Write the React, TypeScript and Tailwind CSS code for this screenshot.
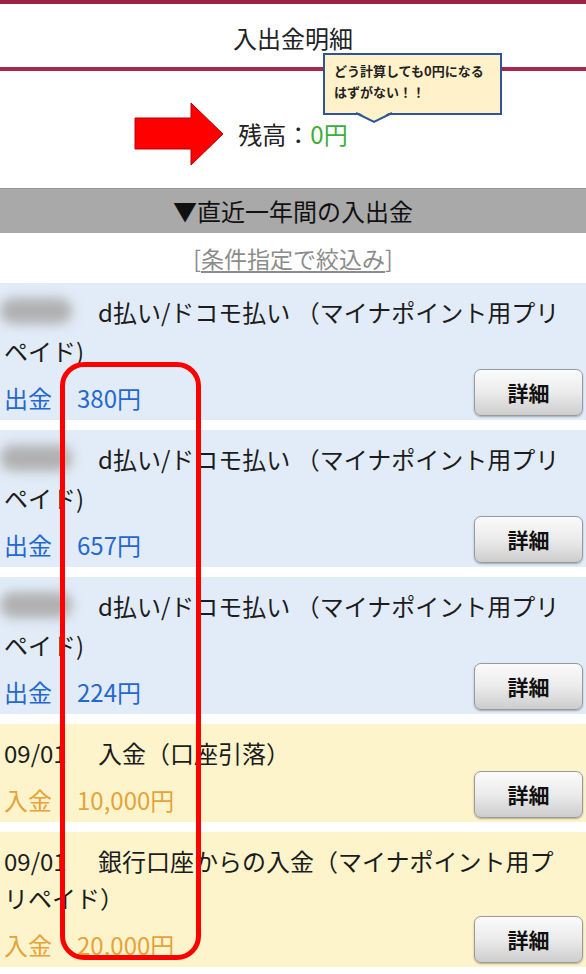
import React from "react";

type Entry = {
  date?: string;
  lines: string[];
  kind: "out" | "in";
  amount: string;
};

const ENTRIES: Entry[] = [
  { lines: ["d払い/ドコモ払い （マイナポイント用プリ", "ペイド)"], kind: "out", amount: "380円" },
  { lines: ["d払い/ドコモ払い （マイナポイント用プリ", "ペイド)"], kind: "out", amount: "657円" },
  { lines: ["d払い/ドコモ払い （マイナポイント用プリ", "ペイド)"], kind: "out", amount: "224円" },
  { date: "09/01", lines: ["入金（口座引落）"], kind: "in", amount: "10,000円" },
  { date: "09/01", lines: ["銀行口座からの入金（マイナポイント用プ", "リペイド）"], kind: "in", amount: "20,000円" },
];

function Row({ entry }: { entry: Entry }) {
  const isOut = entry.kind === "out";
  return (
    <div
      className={
        "pt-[10px] pb-[4px] pl-[4px] pr-[3px] " +
        (isOut ? "bg-[#e2ecf8]" : "bg-[#fdf4cc]")
      }
    >
      <div className="text-[24px] leading-[37px] whitespace-nowrap text-[#1c1c1c]">
        <span className="inline-block w-[94px] align-top">
          {entry.date ? (
            entry.date
          ) : (
            // redacted date
            <span className="inline-block -ml-[4px] mt-[5px] w-[72px] h-[26px] rounded-full bg-[#b0b0b0] blur-[6px]" />
          )}
        </span>
        {entry.lines.map((l, i) => (
          <React.Fragment key={i}>
            {i > 0 && <br />}
            {l}
          </React.Fragment>
        ))}
      </div>
      <div className="flex items-end justify-between">
        <div
          className={
            "text-[24px] leading-[37px] " +
            (isOut ? "text-[#2568cf]" : "text-[#e5a33a]")
          }
        >
          <span className="inline-block w-[73px]">{isOut ? "出金" : "入金"}</span>
          {entry.amount}
        </div>
        <button className="w-[109px] h-[47px] rounded-[7px] border border-[#9a9a9a] bg-gradient-to-b from-[#fbfbfb] via-[#ebebeb] to-[#cdcdcd] shadow-[0_1px_2px_rgba(0,0,0,0.3)] text-[21px] font-bold text-[#111]">
          詳細
        </button>
      </div>
    </div>
  );
}

export default function App() {
  return (
    <div className="relative w-[586px] min-h-[974px] bg-white font-['Noto_Sans_CJK_JP',sans-serif] overflow-hidden">
      <div className="h-[4px] bg-[#9b2244]" />
      <div className="h-[67px] pt-[4px] flex items-center justify-center text-[24px] text-[#222] border-b-[4px] border-[#a8284c]">
        入出金明細
      </div>
      <div className="h-[117px] pt-[8px] flex items-center justify-center text-[24px] text-[#222]">
        残高：<span className="text-[#3cae38]">0円</span>
      </div>
      <div className="h-[45px] bg-[#a9a9a9] border-t border-[#959595] flex items-center justify-center text-[24px] text-[#111]">
        ▼直近一年間の入出金
      </div>
      <div className="h-[50px] flex items-center justify-center text-[23px] text-[#8c8c8c]">
        [<span className="underline underline-offset-[3px]">条件指定で絞込み</span>]
      </div>
      <div className="flex flex-col gap-[10px]">
        {ENTRIES.map((e, i) => (
          <Row key={i} entry={e} />
        ))}
      </div>

      {/* annotations */}
      <svg className="absolute left-[133px] top-[101px]" width="92" height="66" viewBox="0 0 92 66">
        <polygon
          points="2,17 58,17 58,2 90,33 58,64 58,48 2,48"
          fill="#ff0000"
          stroke="#b40000"
          strokeWidth="1"
        />
      </svg>

      <div className="absolute left-[323px] top-[53px] w-[179px] h-[62px] border-2 border-[#2f5597] bg-[#fff1c9] px-[9px] pt-[5px] text-[13px] font-bold leading-[21px] text-[#222]">
        どう計算しても0円になる
        <br />
        はずがない！！
      </div>
      <svg className="absolute left-[354px] top-[111px]" width="40" height="14" viewBox="0 0 40 14">
        <polygon points="2,0 20,11 38,0" fill="#fff1c9" />
        <polyline points="2,2 20,11 38,2" fill="none" stroke="#2f5597" strokeWidth="2" />
      </svg>

      <div className="absolute left-[60px] top-[362px] w-[141px] h-[598px] border-[5px] border-[#ff0000] rounded-[24px]" />
    </div>
  );
}
